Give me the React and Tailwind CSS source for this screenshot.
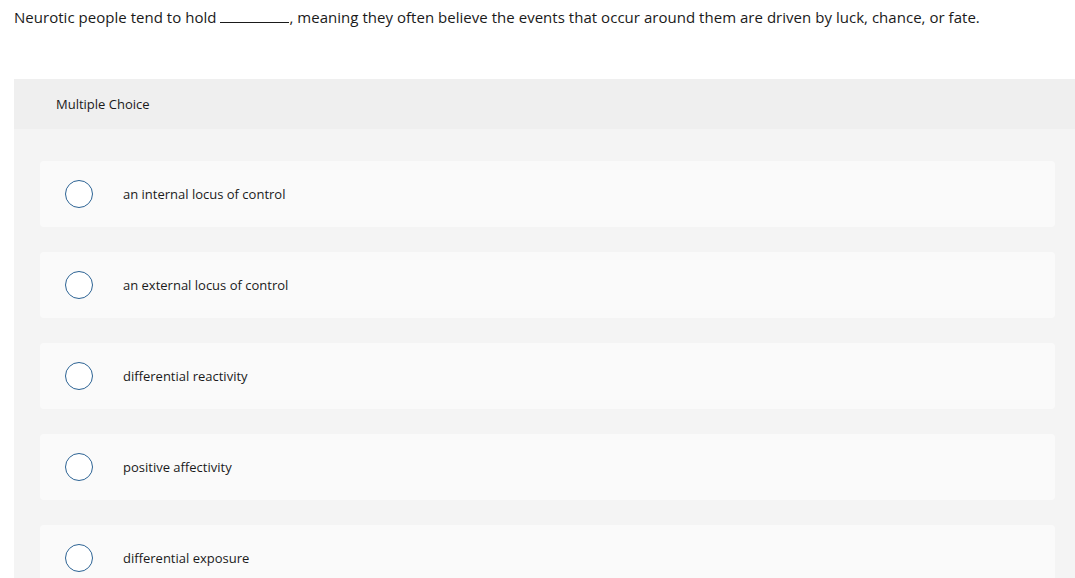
import React from 'react';

const choices = [
    'an internal locus of control',
    'an external locus of control',
    'differential reactivity',
    'positive affectivity',
    'differential exposure',
];

const App = () => {
    return (
        <div className="w-[1075px] h-[578px] overflow-hidden bg-white text-[#1a1a1a]" style={{ fontFamily: '"Open Sans", "Liberation Sans", sans-serif' }}>
            <p className="pl-[14px] pt-[7px] text-[15px] leading-[21px] tracking-[0.03px]">
                Neurotic people tend to hold <span className="inline-block w-[69px] border-b border-[#1a1a1a] align-baseline"></span>, meaning they often believe the events that occur around them are driven by luck, chance, or fate.
            </p>

            <div className="ml-[14px] mt-[51px] bg-[#f4f4f4]">
                <div className="h-[50px] bg-[#efefef] flex items-center pl-[42px] pt-[2px] text-[13px]">
                    Multiple Choice
                </div>
                <div className="pt-[32px] pl-[26px] pr-[20px] flex flex-col gap-[25px]">
                    {choices.map((c) => (
                        <div key={c} className="h-[66px] bg-[#fafafa] rounded flex items-center">
                            <span className="ml-[25px] w-[28px] h-[28px] rounded-full border-[1.5px] border-[#2c6394] bg-white"></span>
                            <span className="ml-[30px] pt-[2px] text-[13px]">{c}</span>
                        </div>
                    ))}
                </div>
            </div>
        </div>
    );
};

export default App;
